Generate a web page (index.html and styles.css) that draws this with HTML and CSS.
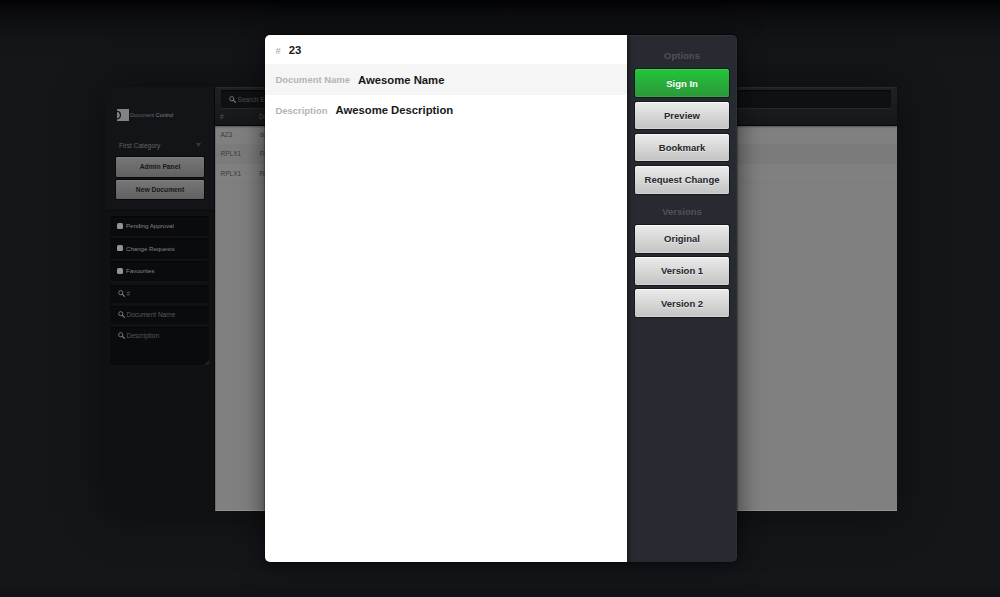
FILE: index.html
```html
<!DOCTYPE html>
<html lang="en">
<head>
<meta charset="utf-8">
<title>Document Control</title>
<link rel="stylesheet" href="styles.css">
</head>
<body>
<svg class="defs" width="0" height="0"><symbol id="search" viewBox="0 0 12 12"><circle cx="4.7" cy="4.7" r="3.6" fill="none" stroke="currentColor" stroke-width="1.7"/><path d="M7.3 7.3L11 11" stroke="currentColor" stroke-width="2.2" stroke-linecap="round"/></symbol></svg>
<div class="app">
  <aside class="sidebar">
    <div class="sidebar-top">
      <div class="logo">
        <svg class="mark" viewBox="0 0 12 12"><path fill="#828282" d="M0 0h12v12H0z"/><path d="M0 2.4C4.6 2.2 4.6 10 0 9.8" fill="none" stroke="#17181b" stroke-width="1.3"/></svg>
        <span>Document <b>Control</b></span>
      </div>
      <div class="category"><span>First Category</span><svg class="caret" viewBox="0 0 5 4"><path d="M0 0h5L2.5 4z" fill="#38393c"/></svg></div>
      <button class="dim-button">Admin Panel</button>
      <button class="dim-button">New Document</button>
    </div>
    <div class="filters">
      <div class="filter check"><i class="box"></i>Pending Approval</div>
      <div class="filter check"><i class="box"></i>Change Requests</div>
      <div class="filter check last"><i class="box"></i>Favourites</div>
      <div class="filter field"><svg class="icon"><use href="#search"/></svg>#</div>
      <div class="filter field"><svg class="icon"><use href="#search"/></svg>Document Name</div>
      <div class="filter area"><svg class="icon"><use href="#search"/></svg>Description<svg class="grip" viewBox="0 0 4 4"><path d="M0 4L4 0M2 4L4 2" stroke="#505153" stroke-width=".6"/></svg></div>
    </div>
  </aside>
  <main class="content">
    <header class="toolbar">
      <div class="search"><svg class="icon"><use href="#search"/></svg>Search En</div>
      <div class="row head"><span>#</span><span>Doc</span></div>
    </header>
    <div class="row"><span>A23</span><span>doc</span></div>
    <div class="row even"><span>RPLX1</span><span>RPLX1</span></div>
    <div class="row"><span>RPLX1</span><span>RPLX1</span></div>
  </main>
</div>
<div class="overlay">
  <section class="modal">
    <div class="details">
      <div class="detail first"><span class="label">#</span><span class="value">23</span></div>
      <div class="detail shaded"><span class="label">Document Name</span><span class="value">Awesome Name</span></div>
      <div class="detail"><span class="label">Description</span><span class="value">Awesome Description</span></div>
    </div>
    <nav class="options">
      <h2>Options</h2>
      <div class="buttons">
        <button class="button primary">Sign In</button>
        <button class="button">Preview</button>
        <button class="button">Bookmark</button>
        <button class="button">Request Change</button>
      </div>
      <h2 class="versions">Versions</h2>
      <div class="buttons">
        <button class="button">Original</button>
        <button class="button">Version 1</button>
        <button class="button">Version 2</button>
      </div>
    </nav>
  </section>
</div>
</body>
</html>
```
FILE: styles.css
```css
* { box-sizing: border-box; }
body {
  margin: 0;
  width: 1000px;
  height: 597px;
  overflow: hidden;
  position: relative;
  font-family: "Liberation Sans", Arial, sans-serif;
  background: linear-gradient(#020203 0, #0b0c0e 13px, #131519 42px, #15161a 100px, #15161a 580px, #101216 597px);
}
.defs { position: absolute; }
button { font-family: inherit; border: 0; padding: 0; display: block; }
.app {
  width: 792px;
  height: 424px;
  margin: 86.5px 0 0 105px;
  display: flex;
  background: #111214;
  box-shadow: 0 3px 38px rgba(0,0,0,.5);
}
.sidebar {
  width: 110px;
  flex: none;
  background: #101113;
  border-right: 1px solid #08090a;
}
.sidebar-top {
  height: 124px;
  padding: 22px 10px 0 11px;
  background: #121418;
  border-bottom: 1px solid #0a0b0c;
}
.logo {
  display: flex;
  align-items: center;
  gap: 1px;
  height: 13px;
  font-size: 5.35px;
  color: #626367;
  white-space: nowrap;
}
.logo b { font-weight: 400; color: #85868a; }
.mark { width: 12px; height: 12px; flex: none; margin-left: 1px; }
.category {
  display: flex;
  align-items: center;
  justify-content: space-between;
  height: 12px;
  margin: 17.5px 3px 6px;
  font-size: 6.6px;
  color: #626366;
}
.caret { width: 5px; height: 4px; }
.dim-button {
  width: 88px;
  height: 19.5px;
  margin-bottom: 3px;
  border-radius: 1.5px;
  background: linear-gradient(#777, #616161);
  box-shadow: inset 0 .5px #878787, 0 0 0 1px #08090a;
  font-size: 6.7px;
  font-weight: 700;
  color: #161719;
}
.filters { padding: 5px 5px 0; display: flex; flex-direction: column; }
.filter {
  display: flex;
  align-items: center;
  width: 99px;
  border-radius: 2px;
  background: #0a0b0c;
  box-shadow: inset 0 1px #060708, 0 0 0 .5px #131416;
  font-size: 6.5px;
  color: #58595b;
}
.check { height: 20.5px; margin-bottom: 2px; padding-left: 7px; gap: 3px; font-size: 6.1px; color: #858688; }
.check.last { margin-bottom: 3.5px; }
.box { width: 6px; height: 6px; border-radius: 1.5px; background: #929394; }
.field { height: 18px; margin-bottom: 3px; padding-left: 7.5px; }
.area { height: 38px; align-items: flex-start; padding: 5.5px 0 0 7.5px; position: relative; }
.icon { width: 7px; height: 7px; color: #747577; margin-right: 2px; flex: none; }
.grip { position: absolute; right: 0; bottom: 0; width: 4px; height: 4px; }
.content {
  flex: 1;
  background: #808080;
  border-bottom: 1px solid #959595;
  border-left: 1px solid #6c6c6c;
}
.toolbar {
  height: 39px;
  margin-left: -1px;
  padding: 2.5px 6px 0;
  background: linear-gradient(#202123, #161719);
  border-top: 1px solid #292a2c;
  border-bottom: 1px solid #050607;
  box-shadow: 0 1px 2px rgba(0,0,0,.35);
}
.search {
  display: flex;
  align-items: center;
  height: 18px;
  padding-left: 7.5px;
  border-radius: 2px;
  background: #0f1012;
  box-shadow: inset 0 1px 1px #060708, 0 1px #26272a;
  font-size: 6.6px;
  color: #505153;
}
.row {
  display: grid;
  grid-template-columns: 39px 1fr;
  align-items: center;
  height: 19.3px;
  padding-left: 4.5px;
  font-size: 6.5px;
  color: #3b3b3b;
  border-bottom: 1px solid #7c7c7c;
}
.row.even { background: #7b7b7b; }
.row.head { height: 17px; padding: 0; margin-left: -1px; color: #555659; border: 0; }
.overlay { position: absolute; inset: 0; padding: 35px 0 0 265px; }
.modal {
  display: flex;
  width: 472px;
  height: 527px;
  border-radius: 5px;
  overflow: hidden;
  background: #272a31;
  box-shadow: 0 2px 26px rgba(0,0,0,.6), 0 0 2px #000;
}
.details { width: 362px; flex: none; background: #fff; box-shadow: 1px 0 5px rgba(0,0,0,.65); z-index: 1; }
.detail { display: flex; align-items: center; height: 30px; padding-left: 10.5px; gap: 8px; }
.detail.first { height: 29px; }
.detail.shaded { background: #f5f5f5; height: 30.5px; }
.label { font-size: 9.45px; font-weight: 700; color: #b4b4b4; line-height: 12px; padding-top: 2px; }
.value { font-size: 11.3px; font-weight: 700; color: #17181a; line-height: 13px; padding-top: 2px; }
.options { flex: 1; padding: 14px 8px 0; box-shadow: inset -1px 0 #2d3037, inset 0 1px #303238; border-radius: 0 5px 5px 0; }
h2 { margin: 0 0 6.4px; height: 14px; line-height: 14px; text-align: center; font-size: 9.5px; font-weight: 700; color: #505257; }
h2.versions { margin-top: 11px; }
.buttons { display: flex; flex-direction: column; gap: 4.6px; }
.button {
  width: 94px;
  height: 27.6px;
  border-radius: 2.5px;
  background: linear-gradient(#ebebeb, #c3c3c3);
  box-shadow: inset 0 1px #fafafa, inset 0 -1px #d4d4d4, 0 0 0 1px #17181c;
  font-size: 9.5px;
  font-weight: 700;
  color: #25262a;
  text-shadow: 0 1px rgba(255,255,255,.5);
}
.button.primary {
  background: linear-gradient(#23c53b, #2b9839);
  box-shadow: inset 0 1px #37d34e, inset 0 -1px #35a844, 0 0 0 1px #17181c;
  color: #fff;
  text-shadow: 0 -1px rgba(0,0,0,.15);
}
```
